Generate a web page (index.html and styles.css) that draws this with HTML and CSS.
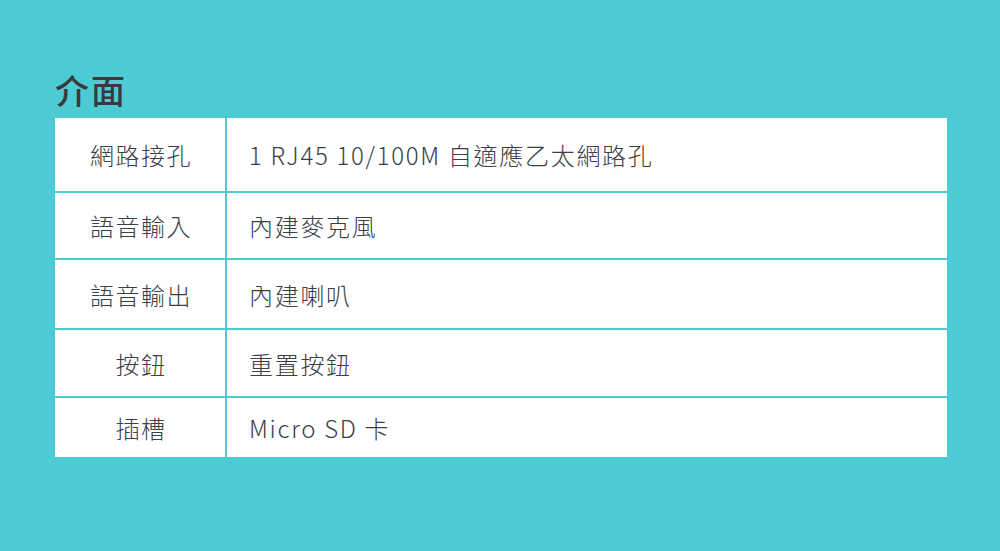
FILE: index.html
```html
<!DOCTYPE html>
<html lang="zh-Hant">
<head>
<meta charset="utf-8">
<link rel="stylesheet" href="styles.css">
</head>
<body>
<main class="page">
  <h1 class="title">介面</h1>
  <table class="spec">
    <tbody>
      <tr class="r1"><th>網路接孔</th><td>1 RJ45 10/100M 自適應乙太網路孔</td></tr>
      <tr class="r2"><th>語音輸入</th><td>內建麥克風</td></tr>
      <tr class="r3"><th>語音輸出</th><td>內建喇叭</td></tr>
      <tr class="r4"><th>按鈕</th><td>重置按鈕</td></tr>
      <tr class="r5"><th>插槽</th><td>Micro SD 卡</td></tr>
    </tbody>
  </table>
</main>
</body>
</html>
```

FILE: styles.css
```css
html, body {
  margin: 0;
  padding: 0;
}
body {
  background: #4ccbd5;
  width: 1000px;
  height: 551px;
  overflow: hidden;
  font-family: "Noto Sans CJK TC", "Noto Sans", sans-serif;
  color: #3b4046;
}
.page {
  padding: 70px 53px 0 55px;
}
.title {
  margin: 0 0 9px 0;
  font-size: 34px;
  line-height: 39px;
  font-weight: 500;
  color: #3a3a3a;
  letter-spacing: 2px;
}
.spec {
  width: 892px;
  border-collapse: collapse;
  background: #fff;
}
.spec th, .spec td {
  border: 2px solid #4ccbd5;
  font-size: 24px;
  font-weight: 300;
  padding: 0;
  vertical-align: middle;
}
.spec tr:first-child th, .spec tr:first-child td { border-top: 0; }
.spec tr:last-child th, .spec tr:last-child td { border-bottom: 0; }
.spec th { border-left: 0; width: 171px; text-align: center; letter-spacing: 1.5px; padding-left: 2px; box-sizing: border-box; }
.spec td { border-right: 0; text-align: left; padding-left: 22px; letter-spacing: 1.7px; }
.r1 th, .r1 td { height: 73px; }
.r2 th, .r2 td { height: 65px; }
.r3 th, .r3 td { height: 68px; }
.r4 th, .r4 td { height: 66px; }
.r5 th, .r5 td { height: 59px; }
```
